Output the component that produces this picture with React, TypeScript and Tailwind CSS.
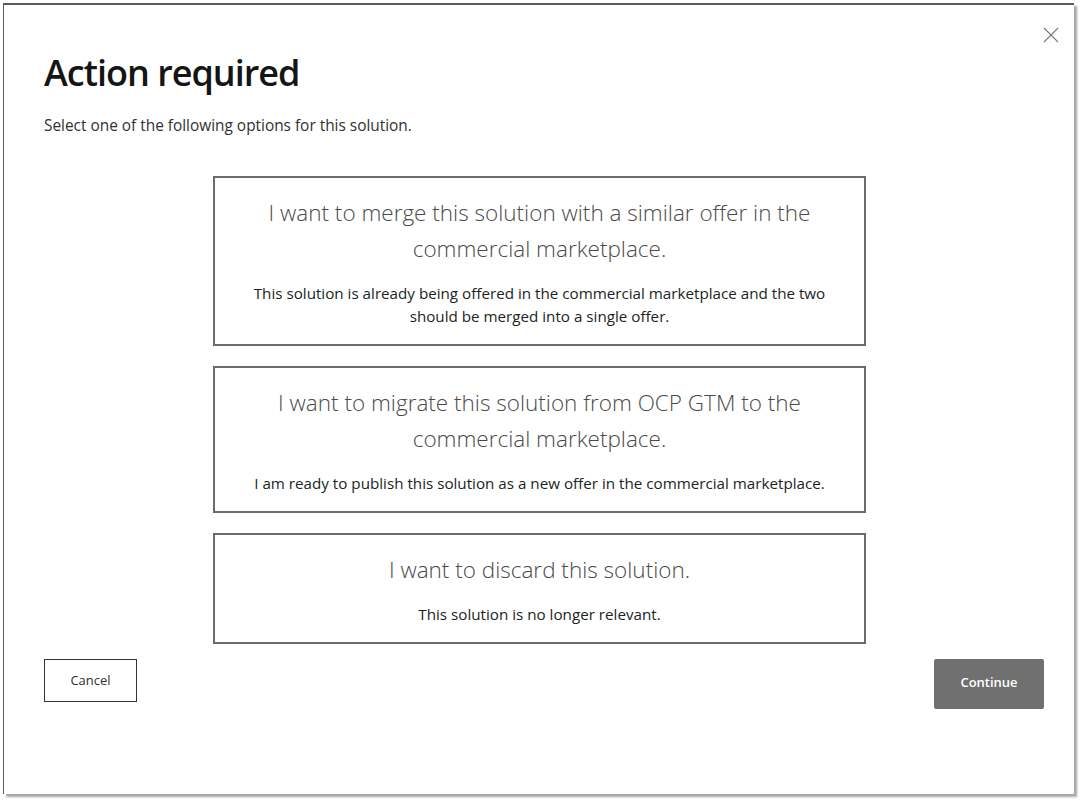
import React from 'react';

const options = [
  {
    title: ['I want to merge this solution with a similar offer in the', 'commercial marketplace.'],
    body: ['This solution is already being offered in the commercial marketplace and the two', 'should be merged into a single offer.'],
  },
  {
    title: ['I want to migrate this solution from OCP GTM to the', 'commercial marketplace.'],
    body: ['I am ready to publish this solution as a new offer in the commercial marketplace.'],
  },
  {
    title: ['I want to discard this solution.'],
    body: ['This solution is no longer relevant.'],
  },
];

export default function App() {
  return (
    <div
      className="w-[1083px] h-[806px] bg-white pl-[3px] pt-[3px] text-[#201f1e]"
      style={{ fontFamily: '"Open Sans", "Noto Sans", sans-serif' }}
    >
      <div className="relative w-[1071px] h-[791px] bg-white border-l border-t-2 border-[#5a5a5a] shadow-[3px_3px_2px_rgba(0,0,0,0.35)]">
        {/* close */}
        <button className="absolute right-[15px] top-[22px] w-[16px] h-[16px] text-[#7a7a7a]" aria-label="Close">
          <svg viewBox="0 0 16 16" className="w-[16px] h-[16px]" fill="none" stroke="currentColor" strokeWidth={1.1}>
            <path d="M1 1l14 14M15 1L1 15" />
          </svg>
        </button>

        <div className="pl-[40px] pr-[30px] pt-[44px]">
          <h1 className="text-[36px] leading-[48px] font-semibold tracking-[-1px] text-[#151515]">Action required</h1>
          <p className="mt-[19px] text-[15.4px] leading-[20px] text-[#323130]">
            Select one of the following options for this solution.
          </p>

          <div className="mt-[40px] flex flex-col items-center gap-[20px] pr-[9px]">
            {options.map((o, i) => (
              <div
                key={i}
                className="w-[653px] border-2 border-[#6b6b6b] bg-white px-[10px] pt-[17px] pb-[16px] text-center cursor-pointer"
              >
                <div className="text-[22.5px] leading-[36px] font-light text-[#4a4a4a]">
                  {o.title.map((t, j) => (
                    <div key={j}>{t}</div>
                  ))}
                </div>
                <div className="mt-[15px] text-[15.2px] leading-[23px] text-[#201f1e]">
                  {o.body.map((t, j) => (
                    <div key={j}>{t}</div>
                  ))}
                </div>
              </div>
            ))}
          </div>

          <div className="mt-[15px] flex items-start justify-between">
            <button className="w-[93px] h-[43px] border border-[#333] bg-white text-[13px] text-[#323130]">
              Cancel
            </button>
            <button className="w-[110px] h-[50px] rounded-[2px] bg-[#707070] pb-[3px] text-[13px] font-semibold text-white">
              Continue
            </button>
          </div>
        </div>
      </div>
    </div>
  );
}
